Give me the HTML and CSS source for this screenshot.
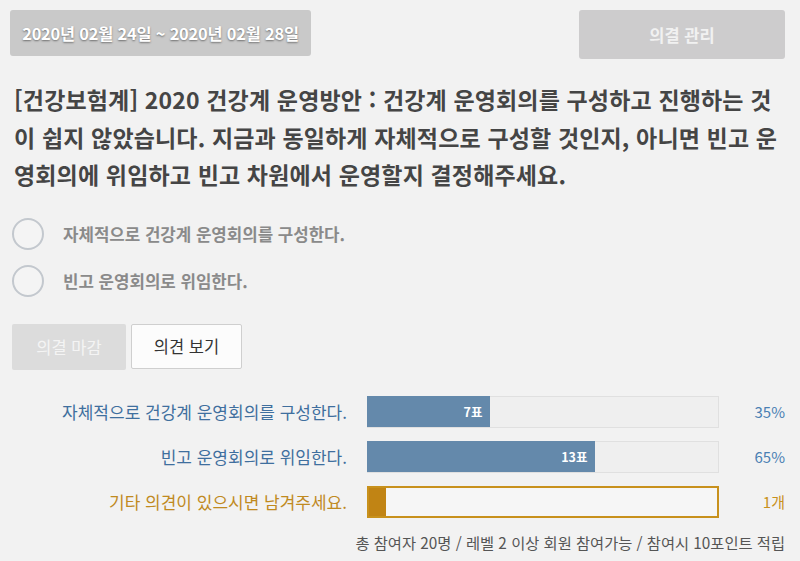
FILE: index.html
```html
<!DOCTYPE html>
<html lang="ko">
<head>
<meta charset="utf-8">
<link rel="stylesheet" href="styles.css">
</head>
<body>
<div class="page">
  <div class="header">
    <div class="date-badge">2020년 02월 24일 ~ 2020년 02월 28일</div>
    <div class="manage-btn">의결 관리</div>
  </div>
  <div class="title">[건강보험계] 2020 건강계 운영방안 : 건강계 운영회의를 구성하고 진행하는 것이 쉽지 않았습니다. 지금과 동일하게 자체적으로 구성할 것인지, 아니면 빈고 운영회의에 위임하고 빈고 차원에서 운영할지 결정해주세요.</div>
  <div class="options">
    <div class="option"><span class="radio"></span><span class="opt-text">자체적으로 건강계 운영회의를 구성한다.</span></div>
    <div class="option"><span class="radio"></span><span class="opt-text">빈고 운영회의로 위임한다.</span></div>
  </div>
  <div class="actions">
    <div class="btn btn-close">의결 마감</div>
    <div class="btn btn-view">의견 보기</div>
  </div>
  <div class="results">
    <div class="r-label">자체적으로 건강계 운영회의를 구성한다.</div>
    <div class="r-bar"><div class="r-fill" style="width:35%"><span>7표</span></div></div>
    <div class="r-val">35%</div>

    <div class="r-label">빈고 운영회의로 위임한다.</div>
    <div class="r-bar"><div class="r-fill" style="width:65%"><span>13표</span></div></div>
    <div class="r-val">65%</div>

    <div class="r-label etc">기타 의견이 있으시면 남겨주세요.</div>
    <div class="r-bar etc"><div class="r-fill etc" style="width:5%"></div></div>
    <div class="r-val etc">1개</div>
  </div>
  <div class="footer">총 참여자 20명 / 레벨 2 이상 회원 참여가능 / 참여시 10포인트 적립</div>
</div>
</body>
</html>
```

FILE: styles.css
```css
* { box-sizing: border-box; }
html, body {
  margin: 0;
  padding: 0;
  background: #f2f2f2;
  font-family: "Noto Sans CJK KR", "Noto Sans", sans-serif;
}
.page {
  width: 800px;
  height: 561px;
  padding: 10px 15px 0 10px;
  overflow: hidden;
}
.header {
  display: flex;
  justify-content: space-between;
  align-items: flex-start;
}
.date-badge {
  width: 301px;
  height: 46px;
  display: flex;
  align-items: center;
  justify-content: center;
  background: #c9c9c9;
  border-radius: 3px;
  color: #fff;
  font-size: 16.4px;
  font-weight: 700;
  letter-spacing: -0.2px;
  text-shadow: 0 1px 2px rgba(0,0,0,0.45);
}
.manage-btn {
  width: 206px;
  height: 49px;
  display: flex;
  align-items: center;
  justify-content: center;
  background: #cdcccd;
  border-radius: 3px;
  color: #f1f1f1;
  font-size: 16.5px;
  font-weight: 700;
}
.title {
  margin: 22px 0 0 4px;
  font-size: 23px;
  font-weight: 700;
  line-height: 37.5px;
  letter-spacing: 0.15px;
  color: #454545;
  word-break: break-all;
}
.options {
  margin-top: 24px;
  display: flex;
  flex-direction: column;
  gap: 15px;
  padding-left: 2px;
}
.option {
  display: flex;
  align-items: center;
  height: 32px;
}
.radio {
  width: 32px;
  height: 32px;
  border: 2.5px solid #c3c8ce;
  border-radius: 50%;
  background: #f4f4f4;
  flex: none;
}
.opt-text {
  margin-left: 19px;
  font-size: 16.8px;
  font-weight: 700;
  color: #8a8a8a;
}
.actions {
  margin-top: 27px;
  display: flex;
  gap: 5px;
  padding-left: 2px;
}
.btn {
  height: 46px;
  display: flex;
  align-items: center;
  justify-content: center;
  font-size: 16.5px;
  border-radius: 2px;
}
.btn-close {
  width: 114px;
  background: #dcdcdc;
  color: #f4f4f4;
}
.btn-view {
  width: 111px;
  height: 45px;
  background: #fcfcfc;
  border: 1px solid #cfcfcf;
  color: #333;
}
.results {
  margin-top: 26px;
  display: grid;
  grid-template-columns: 337px 352px 86px;
  grid-auto-rows: 32px;
  row-gap: 13px;
  align-items: center;
}
.r-label {
  text-align: right;
  padding-right: 20px;
  width: 357px;
  margin-right: -20px;
  font-size: 17px;
  color: #3f6f9e;
}
.r-label.etc { color: #c08a1f; }
.r-bar {
  grid-column: 2;
  margin-left: 20px;
  width: 352px;
  height: 32px;
  background: #efefef;
  border: 1px solid #e0e0e0;
  display: flex;
}
.r-bar.etc {
  border: 2px solid #c8911c;
  background: #f6f6f6;
}
.r-fill {
  background: #6489ab;
  display: flex;
  align-items: center;
  justify-content: flex-end;
  padding-right: 7px;
  color: #fff;
  font-size: 12.5px;
  font-weight: 700;
  margin: -1px 0 0 -1px;
  height: calc(100% + 1px);
}
.r-fill.etc {
  background: #c18414;
  margin: 0;
  height: 100%;
}
.r-val {
  text-align: right;
  margin-left: 20px;
  font-size: 15px;
  color: #4a80b3;
}
.r-val.etc { color: #c8911c; }
.footer {
  margin-top: 13px;
  text-align: right;
  font-size: 15.3px;
  color: #555;
}
```
